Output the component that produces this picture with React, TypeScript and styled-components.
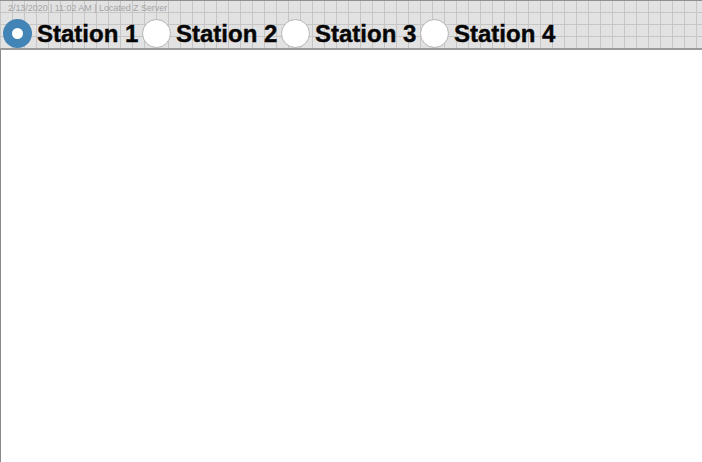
import styled, { createGlobalStyle } from "styled-components";

const GlobalStyle = createGlobalStyle`
  html, body {
    margin: 0;
    padding: 0;
    height: 100%;
    background: #fff;
    overflow: hidden;
  }
`;

const Page = styled.div`
  display: flex;
  flex-direction: column;
  width: 702px;
  height: 462px;
  box-sizing: border-box;
  border-left: 1px solid #8a8a8a;
`;

const Header = styled.div`
  flex: none;
  height: 50px;
  margin-left: -1px;
  box-sizing: border-box;
  border-top: 1px solid #8f8f8f;
  border-bottom: 2px solid #9a9a9a;
  background-color: #e2e2e2;
  background-image:
    linear-gradient(to right, #c6c6c6 1px, transparent 1px),
    linear-gradient(to bottom, #c6c6c6 1px, transparent 1px);
  background-size: 12px 12px;
  background-position: 0 -1px;
`;

const Timestamp = styled.div`
  height: 17px;
  padding-left: 8px;
  font: 9px/14px "Liberation Sans", sans-serif;
  letter-spacing: -0.05px;
  color: #a4a4a4;
  white-space: nowrap;
`;

const Stations = styled.div`
  display: flex;
  align-items: center;
  padding-left: 3px;
`;

const Station = styled.label`
  display: flex;
  align-items: center;
  width: 139px;
  height: 30px;
`;

const Radio = styled.span<{ $selected?: boolean }>`
  flex: none;
  box-sizing: border-box;
  width: 29px;
  height: 29px;
  border-radius: 50%;
  background: #fff;
  border: ${(p) => (p.$selected ? "9px solid #4384b6" : "1px solid #b4b4b4")};
`;

const Name = styled.span`
  margin-left: 5px;
  padding-top: 2px;
  font: bold 24px/30px "Liberation Sans", sans-serif;
  -webkit-text-stroke: 0.4px #060606;
  color: #060606;
  white-space: nowrap;
`;

const Content = styled.main`
  flex: 1;
  background: #fff;
`;

const stations = ["Station 1", "Station 2", "Station 3", "Station 4"];

const App = () => {
  return (
    <>
      <GlobalStyle />
      <Page>
        <Header>
          <Timestamp>2/13/2020 | 11:02 AM | Located Z Server</Timestamp>
          <Stations>
            {stations.map((station, idx) => (
              <Station key={station}>
                <Radio $selected={idx === 0} />
                <Name>{station}</Name>
              </Station>
            ))}
          </Stations>
        </Header>
        <Content />
      </Page>
    </>
  );
};

export default App;
